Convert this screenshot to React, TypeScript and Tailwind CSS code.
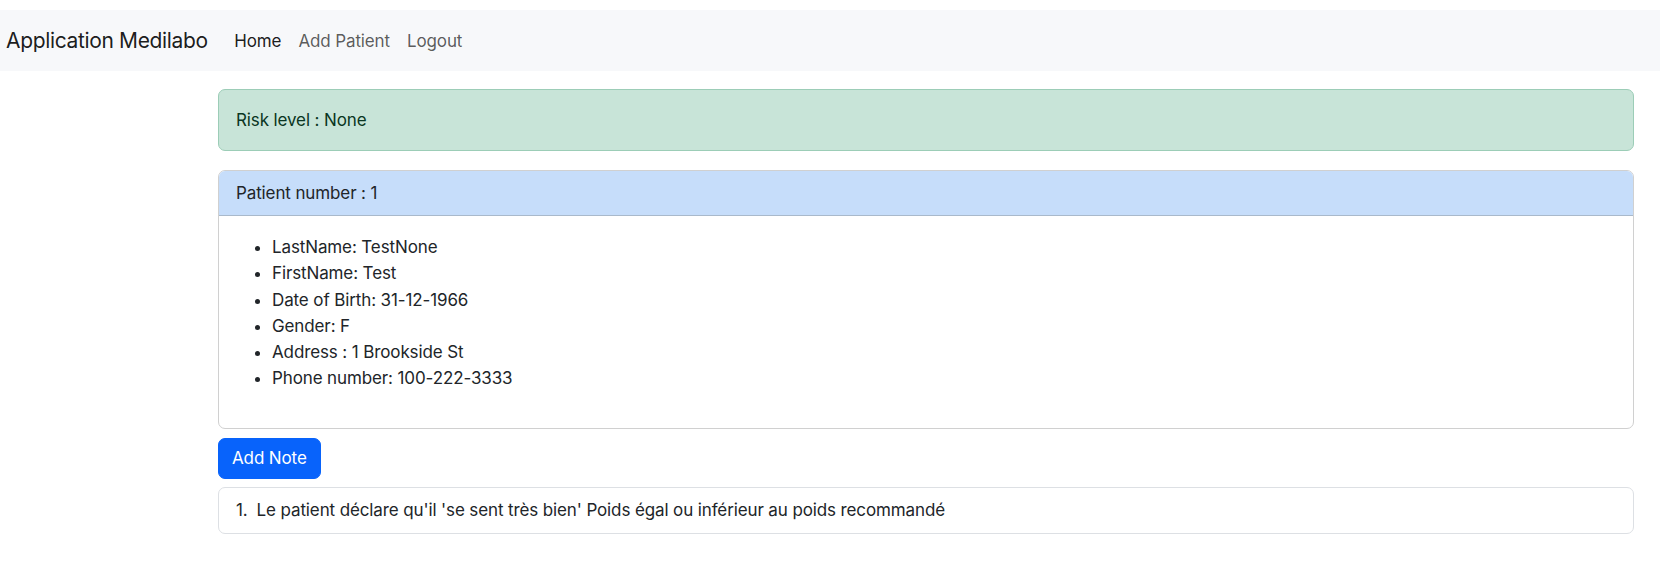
import React from "react";

type Patient = {
    id: number;
    lastName: string;
    firstName: string;
    birthDate: string;
    gender: string;
    address: string;
    phone: string;
};

const patient: Patient = {
    id: 1,
    lastName: "TestNone",
    firstName: "Test",
    birthDate: "31-12-1966",
    gender: "F",
    address: "1 Brookside St",
    phone: "100-222-3333",
};

const notes = [
    "Le patient déclare qu'il 'se sent très bien' Poids égal ou inférieur au poids recommandé",
];

function NavBar() {
    return (
        <nav className="flex h-[61px] items-center bg-[#f7f8fa] pl-[6px]">
            <a href="#" className="mr-[18px] text-[21px] leading-[30px] tracking-[-0.35px] text-black/90">
                Application Medilabo
            </a>
            <ul className="flex">
                <li>
                    <a href="#" className="block px-[8.5px] py-[8px] text-[17px] leading-[26px] text-black/90">
                        Home
                    </a>
                </li>
                <li>
                    <a href="#" className="block px-[8.5px] py-[8px] text-[17px] leading-[26px] text-black/65">
                        Add Patient
                    </a>
                </li>
                <li>
                    <a href="#" className="block px-[8.5px] py-[8px] text-[17px] leading-[26px] text-black/65">
                        Logout
                    </a>
                </li>
            </ul>
        </nav>
    );
}

export default function App() {
    const rows = [
        ["LastName: ", patient.lastName],
        ["FirstName: ", patient.firstName],
        ["Date of Birth: ", patient.birthDate],
        ["Gender: ", patient.gender],
        ["Address : ", patient.address],
        ["Phone number: ", patient.phone],
    ];

    return (
        <div className="min-h-screen bg-white pt-[10px] font-['Inter','Noto_Sans',sans-serif] text-[17px] leading-[26px] tracking-[-0.12px] text-[#212529]">
            <NavBar />

            <main className="ml-[218px] w-[1416px] pt-[18px]">
                {/* RISK */}
                <div className="rounded-[7px] border border-[#9ccdb7] bg-[#c8e4d8] px-[17px] py-[17px] text-[#0a3622]">
                    Risk level : None
                </div>

                {/* PATIENT CARD */}
                <div className="mt-[19px] overflow-hidden rounded-[7px] border border-[#d0d0d0]">
                    <div className="border-b border-[#a9b9cb] bg-[#c6ddfa] px-[17px] py-[9px]">
                        Patient number : {patient.id}
                    </div>
                    <div className="px-[17px] pt-[18px] pb-[19px]">
                        <ul className="mb-[17px] list-disc pl-[36px] leading-[26.3px]">
                            {rows.map(([label, value]) => (
                                <li key={label}>
                                    {label}
                                    {value}
                                </li>
                            ))}
                        </ul>
                    </div>
                </div>

                <button
                    type="button"
                    className="mt-[9px] rounded-[7px] border border-[#0863fb] bg-[#0863fb] px-[13px] py-[6.5px] text-[17px] leading-[26px] text-white"
                >
                    Add Note
                </button>

                {/* NOTES */}
                <ol className="mt-[8px] rounded-[7px] border border-[#dde0e4]">
                    {notes.map((note, i) => (
                        <li key={i} className="px-[17px] py-[9.5px]">
                            <span className="mr-[9px]">{i + 1}.</span>
                            {note}
                        </li>
                    ))}
                </ol>
            </main>
        </div>
    );
}
